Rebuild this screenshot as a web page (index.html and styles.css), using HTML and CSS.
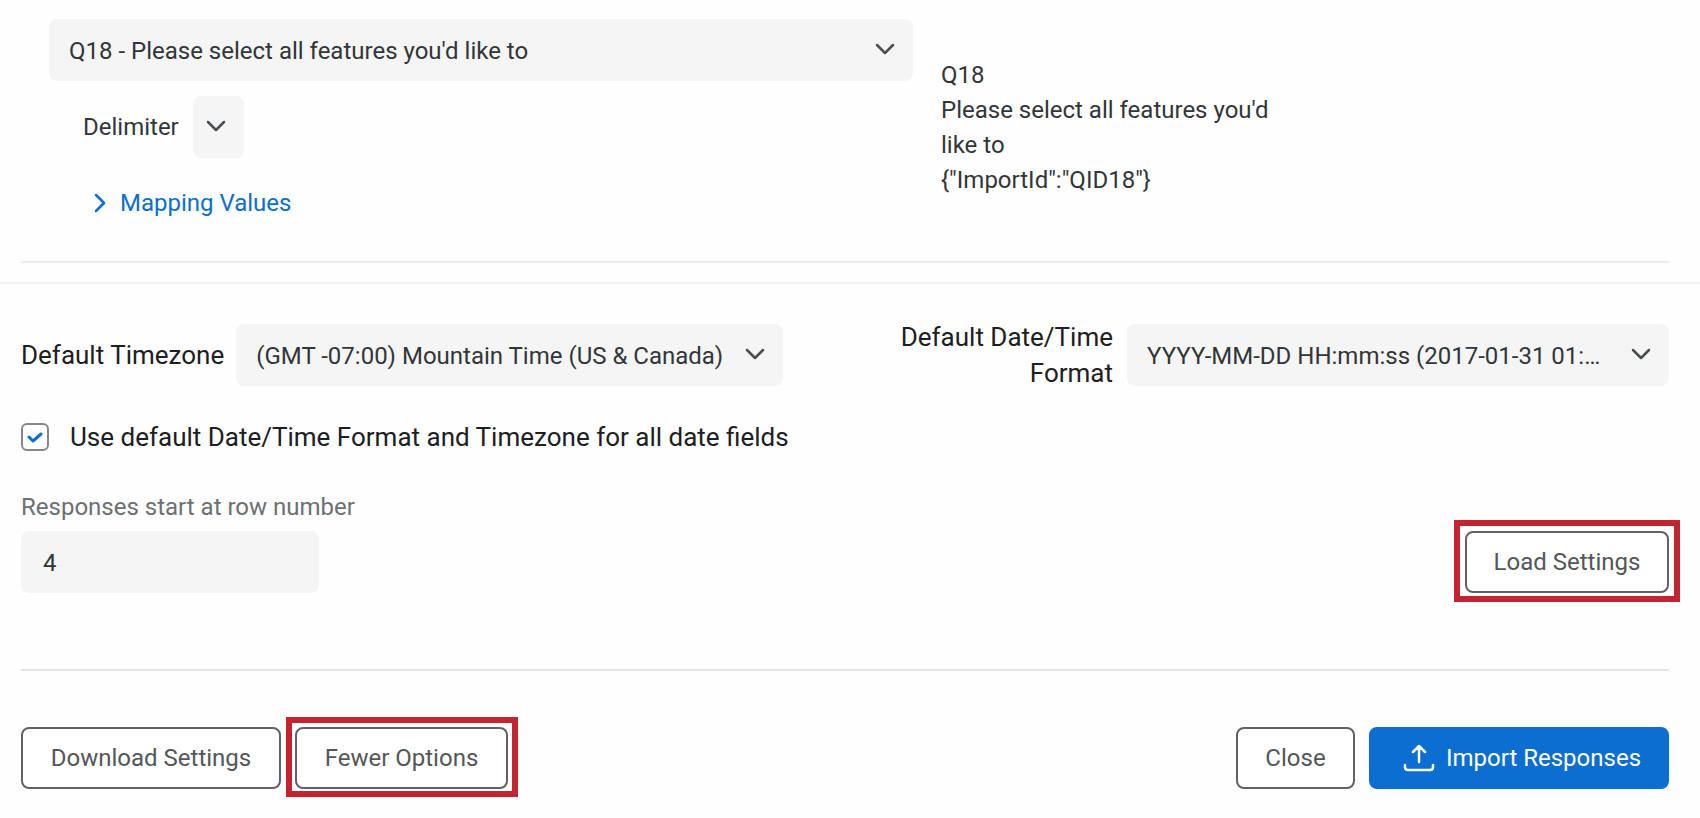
FILE: index.html
```html
<!DOCTYPE html>
<html lang="en">
<head>
<meta charset="utf-8">
<meta name="viewport" content="width=device-width, initial-scale=1">
<title>Import Responses</title>
<link rel="stylesheet" href="styles.css">
</head>
<body>
<main class="page">
  <section class="mapping">
    <div class="mapping-fields">
      <div class="select">
        <select class="select-box" aria-label="Question">
          <option>Q18 - Please select all features you'd like to</option>
        </select>
        <svg class="chevron" viewBox="0 0 20 12" aria-hidden="true"><path d="M2 2l8 8 8-8"/></svg>
      </div>
      <div class="delimiter">
        <label for="delimiter">Delimiter</label>
        <div class="select select-small">
          <select class="select-box" id="delimiter"><option></option></select>
          <svg class="chevron" viewBox="0 0 20 12" aria-hidden="true"><path d="M2 2l8 8 8-8"/></svg>
        </div>
      </div>
      <a class="mapping-link" href="#">
        <svg class="caret" viewBox="0 0 12 20" aria-hidden="true"><path d="M2 2l8 8-8 8"/></svg>
        Mapping Values
      </a>
    </div>
    <div class="mapping-source">
      <div>Q18</div>
      <div>Please select all features you'd like to</div>
      <div>{"ImportId":"QID18"}</div>
    </div>
  </section>

  <section class="options">
    <div class="defaults">
      <div class="default-field">
        <label class="strong" for="timezone">Default Timezone</label>
        <div class="select select-timezone">
          <select class="select-box" id="timezone"><option>(GMT -07:00) Mountain Time (US &amp; Canada)</option></select>
          <svg class="chevron" viewBox="0 0 20 12" aria-hidden="true"><path d="M2 2l8 8 8-8"/></svg>
        </div>
      </div>
      <div class="default-field">
        <label class="strong format-label" for="format">Default Date/Time Format</label>
        <div class="select select-format">
          <select class="select-box" id="format"><option>YYYY-MM-DD HH:mm:ss (2017-01-31 01:23:45)</option></select>
          <svg class="chevron" viewBox="0 0 20 12" aria-hidden="true"><path d="M2 2l8 8 8-8"/></svg>
        </div>
      </div>
    </div>

    <div class="check-row">
      <span class="check">
        <input class="check-box" type="checkbox" id="use-default" checked>
        <svg class="check-mark" viewBox="0 0 16 12" aria-hidden="true"><path d="M2 6l4 4 8-7"/></svg>
      </span>
      <label class="strong" for="use-default">Use default Date/Time Format and Timezone for all date fields</label>
    </div>

    <div class="row-start">
      <div class="row-field">
        <label class="muted" for="row-number">Responses start at row number</label>
        <input class="text-box" id="row-number" type="text" inputmode="numeric" value="4">
      </div>
      <span class="frame frame-load"><button class="button button-load" type="button">Load Settings</button></span>
    </div>
  </section>

  <footer class="footer">
    <div class="group">
      <button class="button button-download" type="button">Download Settings</button>
      <span class="frame frame-fewer"><button class="button button-fewer" type="button">Fewer Options</button></span>
    </div>
    <div class="group">
      <button class="button button-close" type="button">Close</button>
      <button class="button button-primary" type="button">
        <svg class="upload" viewBox="0 0 32 28" aria-hidden="true"><path d="M16 18V3M10 8l6-6 6 6M2 21v2q0 3 3 3h22q3 0 3-3v-2"/></svg>
        Import Responses
      </button>
    </div>
  </footer>
</main>
</body>
</html>
```

FILE: styles.css
```css
* { box-sizing: border-box; }

body {
  margin: 0;
  background: #fefefe;
  color: #32363a;
  font-family: Roboto, "Liberation Sans", sans-serif;
  font-size: 24px;
  line-height: 34px;
}

button, input, select { font: inherit; color: inherit; }

svg {
  fill: none;
  stroke: currentColor;
  stroke-linecap: round;
  stroke-linejoin: round;
}

.mapping {
  display: flex;
  gap: 28px;
  margin: 0 31px 0 21px;
  padding: 19px 0 39px 28px;
  border-bottom: 2px solid #ececec;
}

.mapping-fields { flex: 0 1 864px; }

.mapping-source {
  width: 350px;
  padding-top: 39px;
  line-height: 35px;
}

.select { position: relative; }

.select-box {
  display: block;
  width: 100%;
  height: 62px;
  padding: 2px 56px 0 20px;
  border: 0;
  border-radius: 8px;
  background: #f5f5f5;
  appearance: none;
  text-overflow: ellipsis;
}

.chevron {
  position: absolute;
  top: 24px;
  right: 18px;
  width: 20px;
  height: 12px;
  stroke: #4b4e51;
  stroke-width: 2.5;
  pointer-events: none;
}

.delimiter {
  display: flex;
  align-items: center;
  gap: 14px;
  padding: 15px 0 0 34px;
}

.select-small { width: 51px; }
.select-small .select-box { padding: 0; }

.mapping-link {
  display: inline-flex;
  align-items: center;
  gap: 14px;
  margin: 28px 0 0 45px;
  color: #0b6ed0;
  text-decoration: none;
}

.caret {
  width: 12px;
  height: 20px;
  stroke-width: 2.5;
}

.options {
  margin-top: 19px;
  padding: 35px 31px 76px 21px;
  border-top: 2px solid #f0f0f0;
}

.defaults, .row-start, .footer {
  display: flex;
  justify-content: space-between;
}

.default-field {
  display: flex;
  align-items: center;
  gap: 12px;
}

.strong {
  color: #1d2023;
  font-size: 26px;
  line-height: 36px;
}

.format-label {
  width: 220px;
  padding-right: 2px;
  text-align: right;
}

.select-timezone { width: 547px; }
.select-format { width: 542px; }

.check-row {
  display: flex;
  align-items: center;
  gap: 21px;
  margin-top: 28px;
}

.check {
  position: relative;
  width: 28px;
  height: 28px;
}

.check-box {
  display: block;
  width: 28px;
  height: 28px;
  margin: 0;
  border: 2px solid #84888c;
  border-radius: 6px;
  background: #fff;
  appearance: none;
}

.check-mark {
  position: absolute;
  top: 8px;
  left: 6px;
  width: 16px;
  height: 12px;
  color: #0b6ed0;
  stroke-width: 3;
  pointer-events: none;
}

.row-start {
  align-items: flex-end;
  margin-top: 35px;
}

.row-field {
  display: flex;
  flex-direction: column;
  gap: 7px;
  width: 298px;
  white-space: nowrap;
}

.muted { color: #6d7073; }

.text-box {
  width: 100%;
  height: 62px;
  padding: 2px 22px 0;
  border: 0;
  border-radius: 8px;
  background: #f5f5f5;
}

.button {
  display: flex;
  align-items: center;
  justify-content: center;
  height: 62px;
  padding: 0;
  border: 2px solid #606366;
  border-radius: 8px;
  background: #fff;
  color: #54575a;
  white-space: nowrap;
}

.button-load { width: 204px; }
.button-download { width: 260px; }
.button-fewer { width: 213px; }
.button-close { width: 119px; }

.button-primary {
  gap: 11px;
  width: 300px;
  padding-left: 6px;
  border-color: #0b6ed0;
  background: #0b6ed0;
  color: #fff;
}

.upload {
  width: 32px;
  height: 28px;
  stroke-width: 2.5;
}

.frame { position: relative; }

.frame::after {
  content: "";
  position: absolute;
  border: 6px solid #c32430;
  pointer-events: none;
}

.frame-load::after { inset: -11px -11px -9px; }
.frame-fewer::after { inset: -10px -10px -8px -9px; }

.footer {
  margin: 0 31px 0 21px;
  padding: 56px 0 24px;
  border-top: 2px solid #e4e4e4;
}

.group {
  display: flex;
  gap: 14px;
}
```
